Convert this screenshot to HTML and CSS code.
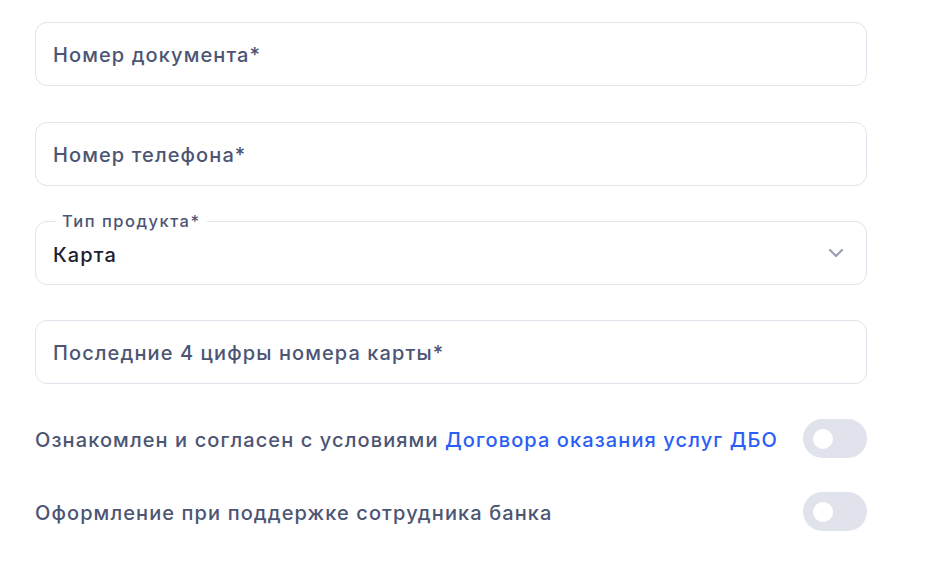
FILE: index.html
```html
<!DOCTYPE html>
<html lang="ru">
<head>
<meta charset="utf-8">
<link rel="stylesheet" href="styles.css">
</head>
<body>
<form class="form">
  <div class="field"><span class="placeholder">Номер документа*</span></div>
  <div class="field"><span class="placeholder">Номер телефона*</span></div>
  <div class="field field--select">
    <span class="legend">Тип продукта*</span>
    <span class="value">Карта</span>
    <svg class="chevron" width="16" height="10" viewBox="0 0 16 10"><path d="M2 2 L8 8 L14 2" fill="none" stroke="#9aa0b1" stroke-width="2.2" stroke-linecap="round" stroke-linejoin="round"/></svg>
  </div>
  <div class="field"><span class="placeholder">Последние 4 цифры номера карты*</span></div>
  <div class="toggle-row">
    <span class="toggle-text">Ознакомлен и согласен с условиями <a class="link" href="#">Договора оказания услуг ДБО</a></span>
    <span class="switch"><span class="knob"></span></span>
  </div>
  <div class="toggle-row">
    <span class="toggle-text">Оформление при поддержке сотрудника банка</span>
    <span class="switch"><span class="knob"></span></span>
  </div>
</form>
</body>
</html>
```
FILE: styles.css
```css
html, body {
  margin: 0;
  padding: 0;
  background: #ffffff;
}
body {
  font-family: Inter, "Open Sans", sans-serif;
  color: #4d5673;
}
.form {
  width: 832px;
  margin-left: 35px;
  padding-top: 22px;
  display: flex;
  flex-direction: column;
  gap: 35px;
}
.field {
  position: relative;
  box-sizing: border-box;
  height: 64px;
  border: 1px solid #e1e3ec;
  border-radius: 12px;
  display: flex;
  align-items: center;
  padding: 0 18px 0 17px;
}
.field:first-child {
  margin-bottom: 1px;
}
.placeholder,
.value,
.toggle-text {
  font-size: 20px;
  font-weight: 500;
  letter-spacing: 1.1px;
  color: #4c5573;
  margin-top: 2px;
}
.legend {
  position: absolute;
  left: 20px;
  top: -11px;
  padding: 0 6px;
  background: #fff;
  font-size: 16.5px;
  font-weight: 500;
  letter-spacing: 1.5px;
  line-height: 20px;
  color: #4c5573;
}
.value {
  color: #1d2030;
  margin-top: 3px;
}
.chevron {
  margin-left: auto;
  margin-right: 4px;
}
.toggle-row {
  display: flex;
  align-items: center;
  justify-content: space-between;
  height: 39px;
}
.toggle-row + .toggle-row {
  margin-top: -1px;
}
.link {
  color: #2b5ef6;
  text-decoration: none;
}
.switch {
  width: 64px;
  height: 39px;
  border-radius: 20px;
  background: #e1e3ec;
  display: flex;
  align-items: center;
  padding-left: 10px;
  box-sizing: border-box;
}
.knob {
  width: 20px;
  height: 20px;
  border-radius: 50%;
  background: #fff;
}
```
